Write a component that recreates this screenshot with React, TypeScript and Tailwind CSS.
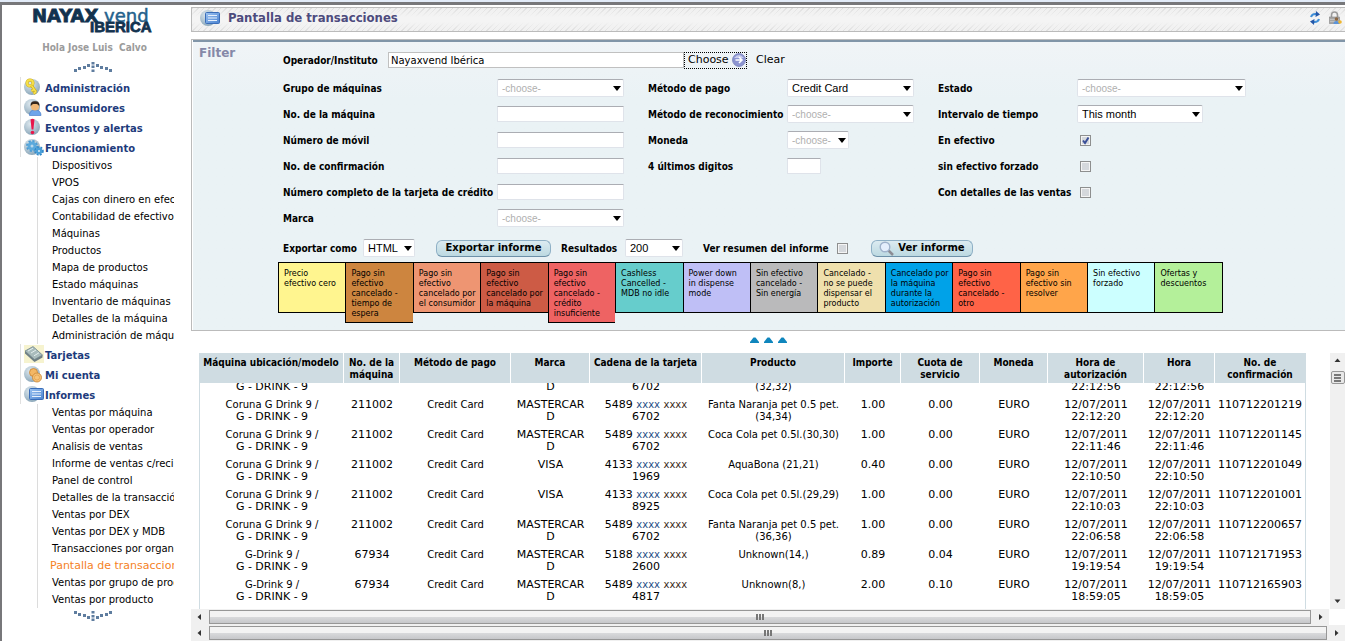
import React, { useLayoutEffect, useRef, useState } from 'react';

const CONDENSED = "font-['DejaVu_Sans_Condensed','DejaVu_Sans',sans-serif]";
const LABEL = "font-['DejaVu_Sans_Condensed','DejaVu_Sans',sans-serif] pt-[2px] text-[10px] leading-3 font-bold whitespace-nowrap text-black";

const Orb = ({ children }: { children?: React.ReactNode }) => (
  <svg viewBox="0 0 20 18" className="h-[18px] w-5 shrink-0" aria-hidden="true">
    <defs>
      <radialGradient id="orb" cx="0.4" cy="0.3" r="0.8">
        <stop offset="0" stopColor="#dfe9ef" />
        <stop offset="0.6" stopColor="#a9bfcd" />
        <stop offset="1" stopColor="#7f9db1" />
      </radialGradient>
      <linearGradient id="sheet" x1="0" y1="0" x2="1" y2="1">
        <stop offset="0" stopColor="#9cc4f2" />
        <stop offset="1" stopColor="#4a82d0" />
      </linearGradient>
    </defs>
    <circle cx="8" cy="9" r="8" fill="url(#orb)" />
    {children}
  </svg>
);

const KeyIcon = () => (
  <Orb>
    <circle cx="6" cy="5" r="3" fill="none" stroke="#c9a91a" strokeWidth="3" />
    <circle cx="6" cy="5" r="3" fill="none" stroke="#f6e04a" strokeWidth="2" />
    <path d="M7.500 7.500L12 14M10 11.500l-2.500 1.500M12 14l-2.500 1.500" stroke="#c9a91a" strokeWidth="3" fill="none" />
    <path d="M7.500 7.500L12 14M10 11.500l-2.500 1.500M12 14l-2.500 1.500" stroke="#f6e04a" strokeWidth="1.600" fill="none" />
  </Orb>
);

const UserIcon = () => (
  <Orb>
    <path d="M5.500 17.500c0-4 2-5.500 5.500-5.500s6 1.500 6 5.500z" fill="#6fa5ea" stroke="#3f74c4" strokeWidth="0.600" />
    <circle cx="11" cy="8.500" r="4" fill="#efb877" />
    <path d="M6.800 8.500C6 4.500 8 3.200 11 3.200s5 1.300 4.200 5.300c-.7-2-1.700-2.500-4.200-2.500s-3.500.5-4.200 2.500z" fill="#33261c" />
  </Orb>
);

const AlertIcon = () => (
  <Orb>
    <path d="M6.500 1.500q2-1.500 4 0L9.400 11.500H7.600z" fill="#e8174b" />
    <circle cx="8.500" cy="14.500" r="1.800" fill="#e8174b" />
  </Orb>
);

const GearsIcon = () => (
  <Orb>
    <circle cx="8" cy="8" r="4.500" fill="none" stroke="#4a9bd4" strokeWidth="3" strokeDasharray="2 1.500" />
    <circle cx="8" cy="8" r="3" fill="#b9d8ec" stroke="#5ba9dc" strokeWidth="3" />
    <circle cx="15" cy="13" r="3.500" fill="none" stroke="#2f86c8" strokeWidth="2.500" strokeDasharray="1.700 1.200" />
    <circle cx="15" cy="13" r="2.200" fill="#d8eaf5" stroke="#4a9fd8" strokeWidth="2.400" />
  </Orb>
);

const CardIcon = () => (
  <svg viewBox="0 0 20 18" className="h-[18px] w-5 shrink-0" aria-hidden="true">
    <rect width="20" height="18" fill="#f6f3cf" />
    <path d="M1 6l8-4.500L18.500 10v2.500l-8 4.500L1 8.500z" fill="#6f7f85" />
    <path d="M1 6l8-4.500L18.500 10l-8 4.500z" fill="#a9bcbc" stroke="#71858a" strokeWidth="0.600" />
    <path d="M4 6l5-2.800M7 8l5-3M10 10.800l5-3" stroke="#e4eeee" strokeWidth="1" />
  </svg>
);

const CoinsIcon = () => (
  <Orb>
    <circle cx="9.500" cy="7.500" r="4" fill="#f3b765" stroke="#c98330" strokeWidth="0.800" />
    <circle cx="13" cy="12.500" r="4.500" fill="#f7c47a" stroke="#c98330" strokeWidth="0.800" />
    <circle cx="13" cy="12.500" r="2.600" fill="none" stroke="#e29f4a" strokeWidth="0.800" />
  </Orb>
);

const ReportIcon = () => (
  <Orb>
    <rect x="5.500" y="3.500" width="14" height="11" rx="1" fill="url(#sheet)" stroke="#3a6db8" />
    <path d="M8 6.500h9M8 9h9M8 11.500h9" stroke="#e6f0fc" strokeWidth="1" />
  </Orb>
);

const menu = [
  { label: 'Administración', icon: <KeyIcon /> },
  { label: 'Consumidores', icon: <UserIcon /> },
  { label: 'Eventos y alertas', icon: <AlertIcon /> },
  {
    label: 'Funcionamiento',
    icon: <GearsIcon />,
    items: [
      'Dispositivos', 'VPOS', 'Cajas con dinero en efectivo', 'Contabilidad de efectivo', 'Máquinas', 'Productos',
      'Mapa de productos', 'Estado máquinas', 'Inventario de máquinas', 'Detalles de la máquina', 'Administración de máquinas',
    ],
  },
  { label: 'Tarjetas', icon: <CardIcon /> },
  { label: 'Mi cuenta', icon: <CoinsIcon /> },
  {
    label: 'Informes',
    icon: <ReportIcon />,
    items: [
      'Ventas por máquina', 'Ventas por operador', 'Analisis de ventas', 'Informe de ventas c/recibo', 'Panel de control',
      'Detalles de la transacción', 'Ventas por DEX', 'Ventas por DEX y MDB', 'Transacciones por organización',
      'Pantalla de transacciones', 'Ventas por grupo de productos', 'Ventas por producto',
    ],
  },
];

const legend = [
  { text: 'Precio\nefectivo cero', color: 'bg-[#fff58f]' },
  { text: 'Pago sin\nefectivo\ncancelado -\ntiempo de\nespera', color: 'bg-[#cd853f]' },
  { text: 'Pago sin\nefectivo\ncancelado por\nel consumidor', color: 'bg-[#ee9572]' },
  { text: 'Pago sin\nefectivo\ncancelado por\nla máquina', color: 'bg-[#cd5b45]' },
  { text: 'Pago sin\nefectivo\ncancelado -\ncrédito\ninsuficiente', color: 'bg-[#ee6363]' },
  { text: 'Cashless\nCancelled -\nMDB no idle', color: 'bg-[#66cdcc]' },
  { text: 'Power down\nin dispense\nmode', color: 'bg-[#bfbff6]' },
  { text: 'Sin efectivo\ncancelado -\nSin energía', color: 'bg-[#bababb]' },
  { text: 'Cancelado -\nno se puede\ndispensar el\nproducto', color: 'bg-[#efe0ad]' },
  { text: 'Cancelado por\nla máquina\ndurante la\nautorización', color: 'bg-[#00a2e8]' },
  { text: 'Pago sin\nefectivo\ncancelado -\notro', color: 'bg-[#ff6347]' },
  { text: 'Pago sin\nefectivo sin\nresolver', color: 'bg-[#ffa54a]' },
  { text: 'Sin efectivo\nforzado', color: 'bg-[#ccffff]' },
  { text: 'Ofertas y\ndescuentos', color: 'bg-[#b4f09a]' },
];

const columns = [
  { title: 'Máquina ubicación/modelo', width: 'w-[145px]' },
  { title: 'No. de la\nmáquina', width: 'w-[56px]' },
  { title: 'Método de pago', width: 'w-[111px]' },
  { title: 'Marca', width: 'w-[79px]' },
  { title: 'Cadena de la tarjeta', width: 'w-[112px]' },
  { title: 'Producto', width: 'w-[143px]' },
  { title: 'Importe', width: 'w-[56px]' },
  { title: 'Cuota de\nservicio', width: 'w-[79px]' },
  { title: 'Moneda', width: 'w-[68px]' },
  { title: 'Hora de\nautorización', width: 'w-[96px]' },
  { title: 'Hora', width: 'w-[71px]' },
  { title: 'No. de\nconfirmación', width: 'w-[91px]' },
];

// place, machine, brand, card start, card end, product, amount, fee, time, confirmation
const rows = [
  ['Coruna G Drink 9 /', '211002', 'MASTERCAR\nD', '5489', '6702', 'Fanta Limon pet 0.5 pet.\n(32,32)', '1.00', '0.00', '22:12:56', '110712201255'],
  ['Coruna G Drink 9 /', '211002', 'MASTERCAR\nD', '5489', '6702', 'Fanta Naranja pet 0.5 pet.\n(34,34)', '1.00', '0.00', '22:12:20', '110712201219'],
  ['Coruna G Drink 9 /', '211002', 'MASTERCAR\nD', '5489', '6702', 'Coca Cola pet 0.5l.(30,30)', '1.00', '0.00', '22:11:46', '110712201145'],
  ['Coruna G Drink 9 /', '211002', 'VISA', '4133', '1969', 'AquaBona (21,21)', '0.40', '0.00', '22:10:50', '110712201049'],
  ['Coruna G Drink 9 /', '211002', 'VISA', '4133', '8925', 'Coca Cola pet 0.5l.(29,29)', '1.00', '0.00', '22:10:03', '110712201001'],
  ['Coruna G Drink 9 /', '211002', 'MASTERCAR\nD', '5489', '6702', 'Fanta Naranja pet 0.5 pet.\n(36,36)', '1.00', '0.00', '22:06:58', '110712200657'],
  ['G-Drink 9 /', '67934', 'MASTERCAR\nD', '5188', '2600', 'Unknown(14,)', '0.89', '0.04', '19:19:54', '110712171953'],
  ['G-Drink 9 /', '67934', 'MASTERCAR\nD', '5489', '4817', 'Unknown(8,)', '2.00', '0.10', '18:59:05', '110712165903'],
];

const Dots = ({ down }: { down?: boolean }) => (
  <svg viewBox="0 0 38 10" className={`h-[10px] w-[38px] ${down ? 'rotate-180' : ''}`} fill="#5f7d9f" aria-hidden="true">
    <path d="M0 7h3v3h-3zM4 5h3v3h-3zM9 4h3v3h-3zM13 2h3v3h-3zM17.500 0h3v2.500h-3zM17.500 3.500h3v2.500h-3zM17.500 7.500h3v2.500h-3zM22 2h3v3h-3zM26 4h3v3h-3zM31 5h3v3h-3zM35 7h3v3h-3z" />
  </svg>
);

const Logo = () => (
  <svg viewBox="0 0 130 26" className="h-[26px] w-[130px] overflow-visible" role="img" aria-label="Nayaxvend Ibérica">
    <g className="font-['DejaVu_Sans',sans-serif]" fill="#12324f">
      <text x="0" y="14" fontSize="18" fontWeight="700" stroke="#12324f" strokeWidth="0.800">NAYAX</text>
      <text x="72" y="14" fontSize="18" fill="#23618c" stroke="#23618c" strokeWidth="0.500">vend</text>
    </g>
    <text x="58" y="24" fontSize="15" fontWeight="700" className="font-['Liberation_Sans',sans-serif]" fill="#12324f" stroke="#12324f" strokeWidth="0.800">IBERICA</text>
  </svg>
);

interface FieldProps {
  id: string;
  className: string;
  options?: string[];
}

const SelectBox = ({ id, className, options = ['-choose-'] }: FieldProps) => {
  const empty = options[0] === '-choose-';
  return (
    <div className={`relative h-[18px] ${className}`}>
      <select
        id={id}
        className={`block h-full w-full appearance-none rounded-[2px] border border-[#dfe3ea] border-t-[#abadb3] bg-white pl-1 font-['Liberation_Sans',sans-serif] outline-none ${empty ? 'text-[10px] text-[#b0b0b0]' : 'text-[11px] text-black'}`}
      >
        {options.map(o => <option key={o}>{o}</option>)}
      </select>
      <svg viewBox="0 0 8 5" className="pointer-events-none absolute top-[7px] right-[3px] h-[5px] w-2" aria-hidden="true">
        <path d="M0 0h8L4 5z" />
      </svg>
    </div>
  );
};

const TextBox = ({ id, className }: FieldProps) => (
  <input
    id={id}
    type="text"
    className={`h-4 rounded-[1px] border border-[#dfe3ea] border-t-[#abadb3] bg-white px-1 text-[10px] outline-none ${className}`}
  />
);

const CheckBox = ({ id, on = false }: { id: string; on?: boolean }) => (
  <span className="relative block h-[11px] w-[11px]">
    <input
      id={id}
      type="checkbox"
      defaultChecked={on}
      className="peer block h-full w-full appearance-none border border-[#8e8f8f] bg-[#d5d8dc] shadow-[inset_0_0_0_1px_#f4f4f4]"
    />
    <svg viewBox="0 0 11 11" className="pointer-events-none absolute inset-0 hidden peer-checked:block" aria-hidden="true">
      <path d="M3 5.500l2 2.500L8.500 2.500" fill="none" stroke="#3a4f98" strokeWidth="2" />
    </svg>
  </span>
);

const Pill = ({ children, className }: { children: React.ReactNode; className: string }) => (
  <button
    type="button"
    className={`flex h-[17px] shrink-0 items-center justify-center rounded-[6px] border border-[#8fb0c6] border-b-[#6d90a8] bg-linear-to-b from-[#dcebf1] to-[#bcd9e1] text-[10px] leading-3 font-bold whitespace-nowrap text-black ${className}`}
  >
    {children}
  </button>
);

const HScroll = ({ className = '' }: { className?: string }) => (
  <div className={`flex h-4 shrink-0 items-center bg-[#f0f0f0] ${className}`} aria-hidden="true">
    <svg viewBox="0 0 18 16" className="h-4 w-[18px] shrink-0"><path d="M10 5v6L6.500 8z" fill="#333" /></svg>
    <div className="flex h-[14px] flex-1 items-center justify-center gap-px border border-[#979797] bg-linear-to-b from-[#f3f3f3] from-50% via-[#d9dadc] via-50% to-[#c6c7ca]">
      <span className="h-[6px] w-[2px] bg-[#777]" />
      <span className="h-[6px] w-[2px] bg-[#777]" />
      <span className="h-[6px] w-[2px] bg-[#777]" />
    </div>
    <svg viewBox="0 0 18 16" className="h-4 w-[18px] shrink-0"><path d="M8 5v6l3.500-3z" fill="#333" /></svg>
  </div>
);

const Sidebar = () => {
  const [active, setActive] = useState('Pantalla de transacciones');

  return (
    <aside className="flex w-[189px] shrink-0 flex-col">
      <div className="flex h-[72px] shrink-0 flex-col items-center pt-[3px]">
        <Logo />
        <p className={`mt-2 pr-1 text-[10px] leading-3 font-bold whitespace-pre text-[#9b9b9b] ${CONDENSED}`}>Hola Jose Luis  Calvo</p>
        <div className="mt-2 pr-2"><Dots /></div>
      </div>
      <nav className="mr-[17px] ml-[18px] min-h-0 flex-1 overflow-hidden text-[10px]">
        {menu.map(group => (
          <div key={group.label}>
            <a href="#" className="flex h-5 items-center border-l border-[#e0e0e0] pl-[3px] font-bold whitespace-nowrap text-[#1d3b7c]">
              {group.icon}
              <span className="pt-[3px] pl-px">{group.label}</span>
            </a>
            {group.items && (
              <ul className="ml-[17px] border-l border-[#dcdcdc]">
                {group.items.map(item => (
                  <li key={item} className="h-[17px] overflow-hidden leading-[17px] whitespace-nowrap">
                    <a
                      href="#"
                      onClick={() => setActive(item)}
                      className={item === active ? 'pl-3 text-[11px] text-[#f5821f]' : 'pl-[14px] text-black'}
                    >
                      {item}
                    </a>
                  </li>
                ))}
              </ul>
            )}
          </div>
        ))}
      </nav>
      <div className="flex h-8 shrink-0 justify-center pt-[2px] pr-2"><Dots down /></div>
    </aside>
  );
};

const Filter = () => (
  <section className="mt-[7px] shrink-0 border border-r-0 border-[#bbbbbb] pl-px">
    <div className="flex border-t-2 border-[#8195a8] bg-linear-to-b from-[#f0f4f7] to-[#eaf2f5] to-20%">
      <h2 className="w-[85px] shrink-0 pt-[3px] pl-[6px] text-[12px] leading-4 font-bold text-[#8588a8]">Filter</h2>
      <form className="min-w-0 flex-1 pt-[5px] pb-[7px]">
        <div className="flex h-[26px] items-center pl-[5px]">
          <label htmlFor="operator" className={`w-[105px] shrink-0 ${LABEL}`}>Operador/Instituto</label>
          <input
            id="operator"
            type="text"
            defaultValue="Nayaxvend Ibérica"
            className="h-4 w-[296px] border border-[#c0c0c0] bg-white px-[2px] text-[10px] outline-none"
          />
          <button type="button" className="flex h-[17px] w-[63px] items-center justify-between border border-dotted border-black pl-[3px] text-[11px]">
            Choose
            <svg viewBox="0 0 14 14" className="h-[14px] w-[14px]" aria-hidden="true">
              <circle cx="7" cy="7" r="6.500" fill="#8c94d0" stroke="#6670b0" strokeWidth="0.600" />
              <path d="M2 5q5-6 10 0" fill="#c9cdee" />
              <path d="M3.500 7h6M7 4l3 3-3 3" fill="none" stroke="#fff" strokeWidth="1.600" />
            </svg>
          </button>
          <button type="button" className="ml-[9px] text-[11px]">Clear</button>
        </div>

        <div className="mt-[2px] grid auto-rows-[26px] grid-cols-[214px_151px_139px_151px_139px_1fr] items-center pl-[5px]">
          <label htmlFor="group" className={LABEL}>Grupo de máquinas</label>
          <SelectBox id="group" className="w-[127px]" />
          <label htmlFor="payment" className={LABEL}>Método de pago</label>
          <SelectBox id="payment" className="w-[127px]" options={['Credit Card', 'Cash']} />
          <label htmlFor="status" className={LABEL}>Estado</label>
          <SelectBox id="status" className="w-[169px]" />

          <label htmlFor="machine" className={LABEL}>No. de la máquina</label>
          <TextBox id="machine" className="w-[127px]" />
          <label htmlFor="recognition" className={LABEL}>Método de reconocimiento</label>
          <SelectBox id="recognition" className="w-[127px]" />
          <label htmlFor="interval" className={LABEL}>Intervalo de tiempo</label>
          <SelectBox id="interval" className="w-[126px]" options={['This month', 'Today']} />

          <label htmlFor="mobile" className={LABEL}>Número de móvil</label>
          <TextBox id="mobile" className="w-[127px]" />
          <label htmlFor="currency" className={LABEL}>Moneda</label>
          <SelectBox id="currency" className="w-[62px]" />
          <label htmlFor="cash" className={LABEL}>En efectivo</label>
          <div className="pl-[3px]"><CheckBox id="cash" on /></div>

          <label htmlFor="confirmation" className={LABEL}>No. de confirmación</label>
          <TextBox id="confirmation" className="w-[127px]" />
          <label htmlFor="digits" className={LABEL}>4 últimos digitos</label>
          <TextBox id="digits" className="w-[34px]" />
          <label htmlFor="forced" className={LABEL}>sin efectivo forzado</label>
          <div className="pl-[3px]"><CheckBox id="forced" /></div>

          <label htmlFor="card" className={LABEL}>Número completo de la tarjeta de crédito</label>
          <TextBox id="card" className="w-[127px]" />
          <label htmlFor="details" className={`col-start-5 ${LABEL}`}>Con detalles de las ventas</label>
          <div className="pl-[3px]"><CheckBox id="details" /></div>

          <label htmlFor="brand" className={LABEL}>Marca</label>
          <SelectBox id="brand" className="w-[127px]" />
        </div>

        <div className="mt-[7px] flex h-5 items-center pl-[5px]">
          <label htmlFor="format" className={`w-20 shrink-0 ${LABEL}`}>Exportar como</label>
          <SelectBox id="format" className="w-[52px]" options={['HTML', 'PDF']} />
          <Pill className="ml-[21px] w-[115px]">Exportar informe</Pill>
          <label htmlFor="results" className={`ml-[10px] w-16 shrink-0 ${LABEL}`}>Resultados</label>
          <SelectBox id="results" className="w-[58px]" options={['200', '500']} />
          <label htmlFor="summary" className={`ml-5 w-[134px] shrink-0 ${LABEL}`}>Ver resumen del informe</label>
          <CheckBox id="summary" />
          <Pill className="ml-[23px] w-[102px] gap-1">
            <svg viewBox="0 0 15 15" className="h-[15px] w-[15px]" aria-hidden="true">
              <path d="M9 9l5 5" stroke="#8c8c94" strokeWidth="2.500" />
              <circle cx="6" cy="6" r="4.800" fill="#e4eefc" stroke="#9fb2cb" strokeWidth="1.400" />
            </svg>
            Ver informe
          </Pill>
        </div>

        <ul className="mt-1 flex w-[945px] items-start text-[8px] leading-[10px]">
          {legend.map((cell, i) => (
            <li
              key={i}
              className={`min-h-[51px] flex-1 border-y border-l border-black pt-[6px] pb-[3px] pl-[5px] whitespace-pre last:border-r ${cell.color}`}
            >
              {cell.text}
            </li>
          ))}
        </ul>
      </form>
    </div>
  </section>
);

const Transactions = () => {
  const scroller = useRef<HTMLDivElement>(null);

  // open slightly scrolled, the first row tucked under the header
  useLayoutEffect(() => {
    if (scroller.current) scroller.current.scrollTop = 14;
  }, []);

  return (
    <div className="flex min-h-0 flex-1">
      <div ref={scroller} className="ml-2 min-w-0 flex-1 overflow-auto [scrollbar-width:none]">
        <table className="w-[1107px] table-fixed border-separate border-spacing-0 text-center text-[10px] leading-3">
          <thead>
            <tr>
              {columns.map(col => (
                <th
                  key={col.title}
                  scope="col"
                  className={`sticky top-0 z-10 h-[30px] border-r border-white bg-[#cfdce2] pt-1 align-top whitespace-pre last:border-[#cfdce2] ${CONDENSED} ${col.width}`}
                >
                  {col.title}
                </th>
              ))}
            </tr>
          </thead>
          <tbody>
            {[...rows, rows[7]].map(([place, machine, brand, start, end, product, amount, fee, time, code], i) => (
              <tr key={i} className="h-[30px] align-top whitespace-pre">
                <td className="border-l border-[#cfdce2]">
                  {place}{'\n'}<span className="text-[11px]">G - DRINK - 9</span>
                </td>
                <td className="text-[11px]">{machine}</td>
                <td>Credit Card</td>
                <td className="text-[11px]">{brand}</td>
                <td className="text-[11px]">
                  {start} <span className="text-[10px] text-[#1f4f86]">xxxx</span> <span className="text-[10px] text-[#3d2d1c]">xxxx</span>
                  {'\n'}{end}
                </td>
                <td>{product}</td>
                <td className="text-[11px]">{amount}</td>
                <td className="text-[11px]">{fee}</td>
                <td className="text-[11px]">EURO</td>
                <td className="text-[11px]">12/07/2011{'\n'}{time}</td>
                <td className="text-[11px]">12/07/2011{'\n'}{time}</td>
                <td className="border-r border-[#cfdce2] text-[11px]">{code}</td>
              </tr>
            ))}
          </tbody>
        </table>
      </div>
      <div className="flex w-[15px] shrink-0 flex-col items-center bg-[#f0f0f0]" aria-hidden="true">
        <svg viewBox="0 0 15 18" className="h-[18px] w-[15px]"><path d="M4.500 9h6L7.500 5.500z" fill="#333" /></svg>
        <div className="flex h-[13px] w-[14px] flex-col items-center justify-center gap-px rounded-[2px] border border-[#979797] bg-[#e8e8e8]">
          <span className="h-[2px] w-[7px] bg-[#777]" />
          <span className="h-[2px] w-[7px] bg-[#777]" />
          <span className="h-[2px] w-[7px] bg-[#777]" />
        </div>
        <svg viewBox="0 0 15 16" className="mt-auto h-4 w-[15px]"><path d="M4.500 6.500h6l-3 3.500z" fill="#333" /></svg>
      </div>
    </div>
  );
};

const App: React.FC = () => (
  <div className="flex h-screen flex-col overflow-hidden bg-white font-['DejaVu_Sans',sans-serif] text-black">
    <div className="h-[2px] shrink-0 bg-[#e2ebf8]" />
    <div className="flex min-h-0 flex-1 border-t-[3px] border-l-2 border-[#77777a]">
      <Sidebar />
      <main className="flex min-w-0 flex-1 flex-col pt-[2px]">
        <header className="flex h-[25px] shrink-0 items-center border border-r-0 border-[#bbbbbb] bg-[linear-gradient(#ffffff00,#f4f4f4_40%,#f4f4f4_60%,#ffffff00),repeating-linear-gradient(135deg,#dedede_0,#dedede_1px,#f0f0f0_1px,#f0f0f0_4px)] pr-[3px] pb-1 pl-2">
          <ReportIcon />
          <h1 className={`ml-2 text-[13px] leading-4 font-bold whitespace-nowrap text-[#4d4b7d] ${CONDENSED}`}>Pantalla de transacciones</h1>
          <button type="button" aria-label="Actualizar" className="ml-auto">
            <svg viewBox="0 0 12 14" className="h-[14px] w-3" aria-hidden="true">
              <path d="M2 6Q3 2.500 7.500 3" fill="none" stroke="#3f8fd8" strokeWidth="2" />
              <path d="M7 0l4 3.500L6.500 6z" fill="#2457a8" />
              <path d="M10 8q-1 3.500-5.500 3" fill="none" stroke="#3f8fd8" strokeWidth="2" />
              <path d="M5 14l-4-3.500L5.500 8z" fill="#2457a8" />
            </svg>
          </button>
          <button type="button" aria-label="Cerrar sesión" className="ml-2">
            <svg viewBox="0 0 13 14" className="h-[14px] w-[13px]" aria-hidden="true">
              <path d="M2.500 7V4a3 3 0 0 1 6 0v3" fill="none" stroke="#9a9a9a" strokeWidth="1.600" />
              <rect x="0.500" y="6" width="10" height="6.500" fill="#a5a5a5" stroke="#858585" strokeWidth="0.600" />
              <path d="M1 8.500h9M1 10.500h9" stroke="#c6c6c6" strokeWidth="0.800" />
              <circle cx="7.500" cy="8" r="1.800" fill="#8c6742" />
              <path d="M4.500 13q0-3 3-3t3 3z" fill="#5c93d8" />
              <circle cx="11" cy="11" r="1.800" fill="#eeb52e" />
            </svg>
          </button>
        </header>
        <Filter />
        <button type="button" aria-label="Ocultar filtro" className="flex h-[22px] shrink-0 items-center justify-center gap-[5px] pb-1">
          {[0, 1, 2].map(i => (
            <svg key={i} viewBox="0 0 9 6" className="h-[6px] w-[9px]" aria-hidden="true">
              <path d="M0 6V5l3.500-4.500h2L9 5v1z" fill="#0f86bd" />
            </svg>
          ))}
        </button>
        <Transactions />
        <HScroll className="mr-4" />
        <HScroll />
      </main>
    </div>
  </div>
);

export default App;
